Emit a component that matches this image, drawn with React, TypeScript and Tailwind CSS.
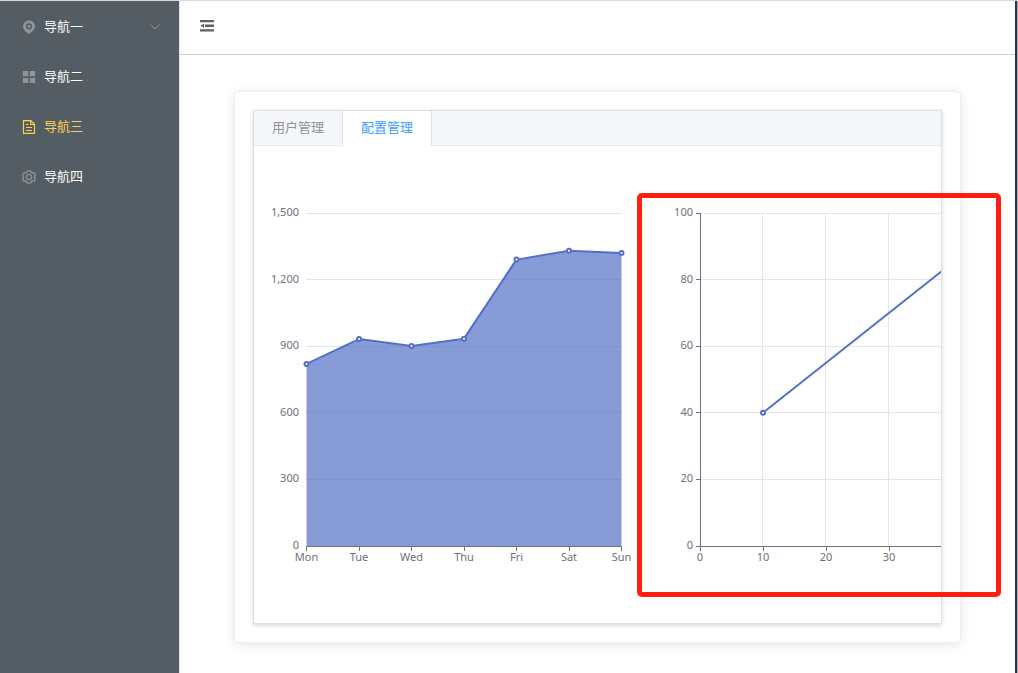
import React, { useState } from "react";

type IconProps = { className?: string };

const LocationIcon = ({ className }: IconProps) => (
  <svg viewBox="0 0 14 14" className={className} fill="currentColor" aria-hidden="true">
    <path
      fillRule="evenodd"
      d="M7 .3a6 6 0 0 1 6 6c0 3-2.700 5.700-6 7.600-3.300-1.900-6-4.600-6-7.600a6 6 0 0 1 6-6Zm0 2.900a3.100 3.100 0 1 0 0 6.200 3.100 3.100 0 0 0 0-6.200Z"
    />
    <circle cx="7" cy="6.300" r="1.500" />
  </svg>
);

const MenuIcon = ({ className }: IconProps) => (
  <svg viewBox="0 0 14 14" className={className} fill="currentColor" aria-hidden="true">
    <path d="M.8 1h5.500v5.200H.8zM7.800 1h5.400v5.200H7.800zM.8 7.900h5.500v5.200H.8zM7.800 7.900h5.400v5.200H7.800z" />
  </svg>
);

const DocumentIcon = ({ className }: IconProps) => (
  <svg viewBox="0 0 14 14" className={className} fill="none" stroke="currentColor" strokeWidth="1.200" aria-hidden="true">
    <path d="M1.500.600h7.300l3.700 3.700v9.100h-11zM8.600.800v3.700h3.700M4 4.500h2.500M4 7.500h6M4 10.500h6" />
  </svg>
);

const SettingIcon = ({ className }: IconProps) => (
  <svg viewBox="0 0 14 14" className={className} fill="none" stroke="currentColor" strokeWidth="1.300" strokeLinejoin="round" aria-hidden="true">
    <path d="M5.300.800h3.400l.5 1.700 1.200.7 1.700-.4 1.400 2.600-1.100 1.200v.8l1.100 1.200-1.400 2.600-1.700-.4-1.200.7-.5 1.700H5.300l-.5-1.700-1.200-.7-1.700.4L.5 8.600l1.100-1.200v-.8L.5 5.400l1.400-2.600 1.700.4 1.200-.7z" />
    <circle cx="7" cy="7" r="2.600" />
  </svg>
);

const ArrowDownIcon = ({ className }: IconProps) => (
  <svg viewBox="0 0 12 12" className={className} fill="none" stroke="currentColor" strokeWidth="1" aria-hidden="true">
    <path d="M1.500 3.500 6 8l4.500-4.500" />
  </svg>
);

const FoldIcon = ({ className }: IconProps) => (
  <svg viewBox="0 0 14 12" className={className} fill="currentColor" aria-hidden="true">
    <path d="M0 0h14v2.300H0zM5 4.600h9v2.300H5zM0 9.200h14v2.300H0zM.5 5.700 4 3.500v4.400z" />
  </svg>
);

const navItems = [
  { label: "导航一", Icon: LocationIcon, expandable: true },
  { label: "导航二", Icon: MenuIcon, expandable: false },
  { label: "导航三", Icon: DocumentIcon, expandable: false },
  { label: "导航四", Icon: SettingIcon, expandable: false },
];

// Plot area inside every 394×453 chart
const LEFT = 39;
const RIGHT = 354;
const TOP = 60;
const BOTTOM = 393;

const yOf = (value: number, max: number) => BOTTOM - (value / max) * (BOTTOM - TOP);
const crisp = (n: number) => Math.floor(n) + 0.5;

const week = [
  { day: "Mon", value: 820 },
  { day: "Tue", value: 932 },
  { day: "Wed", value: 901 },
  { day: "Thu", value: 934 },
  { day: "Fri", value: 1290 },
  { day: "Sat", value: 1330 },
  { day: "Sun", value: 1320 },
];

function Marker({ x, y }: { x: number; y: number }) {
  return <circle cx={x} cy={y} r="2" fill="#fff" stroke="#5470c6" strokeWidth="2" />;
}

function AreaChart() {
  const points = week.map((d, i) => ({
    x: LEFT + 0.5 + (i * (RIGHT - LEFT)) / (week.length - 1),
    y: yOf(d.value, 1500),
  }));
  const line = points.map((p) => `${p.x},${p.y}`).join(" ");
  return (
    <svg width="394" height="453" className="shrink-0 text-[11px]" role="img" aria-label="Mon – Sun">
      {[0, 300, 600, 900, 1200, 1500].map((v) => (
        <g key={v}>
          {v > 0 && <path d={`M${LEFT} ${crisp(yOf(v, 1500))}H${RIGHT + 1}`} stroke="#e0e6f1" />}
          <text x="32" y={Math.round(yOf(v, 1500)) + 3} textAnchor="end" fill="#6e7079">
            {v.toLocaleString("en-US")}
          </text>
        </g>
      ))}
      <polygon
        points={`${LEFT + 0.5},${BOTTOM} ${line} ${RIGHT + 0.5},${BOTTOM}`}
        fill="#5470c6"
        fillOpacity="0.7"
      />
      <path d={`M${LEFT} ${BOTTOM + 0.5}H${RIGHT + 1}`} stroke="#6e7079" />
      {points.map((p, i) => (
        <g key={week[i].day}>
          <path d={`M${Math.round(p.x - 0.5) + 0.5} ${BOTTOM}v5`} stroke="#6e7079" />
          <text x={p.x} y={BOTTOM + 15} textAnchor="middle" fill="#6e7079">
            {week[i].day}
          </text>
        </g>
      ))}
      <polyline points={line} fill="none" stroke="#5470c6" strokeWidth="2" strokeLinejoin="bevel" />
      {points.map((p) => (
        <Marker key={p.x} x={p.x} y={p.y} />
      ))}
    </svg>
  );
}

function LineChart() {
  const xOf = (v: number) => LEFT + (v / 50) * (RIGHT - LEFT);
  const data = [
    [10, 40],
    [50, 100],
  ];
  const points = data.map(([x, y]) => ({ x: xOf(x), y: yOf(y, 100) }));
  return (
    <svg width="394" height="453" className="shrink-0 text-[11px]" role="img" aria-label="0 – 100">
      {[10, 20, 30].map((v) => (
        <path key={v} d={`M${crisp(xOf(v) - 0.5)} ${TOP}V${BOTTOM}`} stroke="#e0e6f1" />
      ))}
      {[0, 20, 40, 60, 80, 100].map((v) => (
        <g key={v}>
          {v > 0 && <path d={`M${LEFT} ${crisp(yOf(v, 100))}H${RIGHT}`} stroke="#e0e6f1" />}
          <path d={`M${LEFT - 4} ${crisp(yOf(v, 100))}h4`} stroke="#6e7079" />
          <text x="32" y={Math.round(yOf(v, 100)) + 3} textAnchor="end" fill="#6e7079">
            {v}
          </text>
        </g>
      ))}
      <path d={`M${LEFT + 0.5} ${TOP}V${BOTTOM}M${LEFT} ${BOTTOM + 0.5}H${RIGHT}`} stroke="#6e7079" />
      {[0, 10, 20, 30].map((v) => (
        <g key={v}>
          <path d={`M${Math.round(xOf(v) - 0.5) + 0.5} ${BOTTOM}v5`} stroke="#6e7079" />
          <text x={xOf(v)} y={BOTTOM + 15} textAnchor="middle" fill="#6e7079">
            {v}
          </text>
        </g>
      ))}
      <polyline points={points.map((p) => `${p.x},${p.y}`).join(" ")} fill="none" stroke="#5470c6" strokeWidth="2" />
      {points.map((p) => (
        <Marker key={p.x} x={p.x} y={p.y} />
      ))}
    </svg>
  );
}

const tabs = ["用户管理", "配置管理"];

export default function App() {
  const [activeNav, setActiveNav] = useState(2);
  const [activeTab, setActiveTab] = useState(1);

  return (
    <div className="flex min-h-screen border-t border-[#d9dade] bg-white font-['Noto_Sans','Noto_Sans_CJK_SC',sans-serif] text-[13px]">
      <nav className="w-[180px] shrink-0 border-r border-[#e6e6e6] bg-[#545c64] pt-px">
        <ul>
          {navItems.map(({ label, Icon, expandable }, i) => (
            <li key={label}>
              <button
                type="button"
                onClick={() => setActiveNav(i)}
                className={
                  "flex h-[50px] w-full items-center gap-2 pr-[18px] pl-[22px] text-left " +
                  (i === activeNav ? "text-[#ffd04b]" : "text-white")
                }
              >
                <Icon className={"size-[14px] shrink-0 " + (i === activeNav ? "text-[#ffd04b]" : "text-[#909399]")} />
                <span className="flex-1">{label}</span>
                {expandable && <ArrowDownIcon className="size-3 text-[#909399]" />}
              </button>
            </li>
          ))}
        </ul>
      </nav>

      <div className="flex min-w-0 flex-1 flex-col">
        <header className="flex h-[54px] items-center border-b border-[#ccc] pb-1 pl-5">
          <button type="button" aria-label="折叠" className="text-[#606266]">
            <FoldIcon className="h-3 w-[14px]" />
          </button>
        </header>

        <main className="px-[54px] pt-9 pb-[30px]">
          <section className="rounded border border-[#ebeef5] bg-white p-[18px] shadow-[0_2px_12px_rgba(0,0,0,0.1)]">
            <div className="relative">
              <div className="overflow-hidden border border-[#dcdfe6] bg-white shadow-[0_2px_4px_rgba(0,0,0,0.12),0_0_6px_rgba(0,0,0,0.04)]">
                <div role="tablist" className="flex h-[35px] bg-[#f5f7fa]">
                  {tabs.map((label, i) => (
                    <button
                      key={label}
                      type="button"
                      role="tab"
                      aria-selected={i === activeTab}
                      onClick={() => setActiveTab(i)}
                      className={
                        "border-r border-b border-r-[#dcdfe6] px-[18px] " +
                        (i === activeTab
                          ? "border-b-white bg-white text-[#409eff]"
                          : "border-b-[#e4e7ed] text-[#909399]")
                      }
                    >
                      {label}
                    </button>
                  ))}
                  <div className="flex-1 border-b border-[#e4e7ed]" />
                </div>
                <div role="tabpanel" className="flex overflow-hidden pt-[7px] pb-[17px] pl-[13px]">
                  <AreaChart />
                  <LineChart />
                </div>
              </div>
              <div className="pointer-events-none absolute top-[83px] left-[384px] h-[404px] w-[364px] rounded-[5px] border-5 border-[#ff1e10]" />
            </div>
          </section>
        </main>
      </div>

      <div className="w-[3px] shrink-0 border-r border-[#a9afb8] bg-[#29344a]" />
    </div>
  );
}
